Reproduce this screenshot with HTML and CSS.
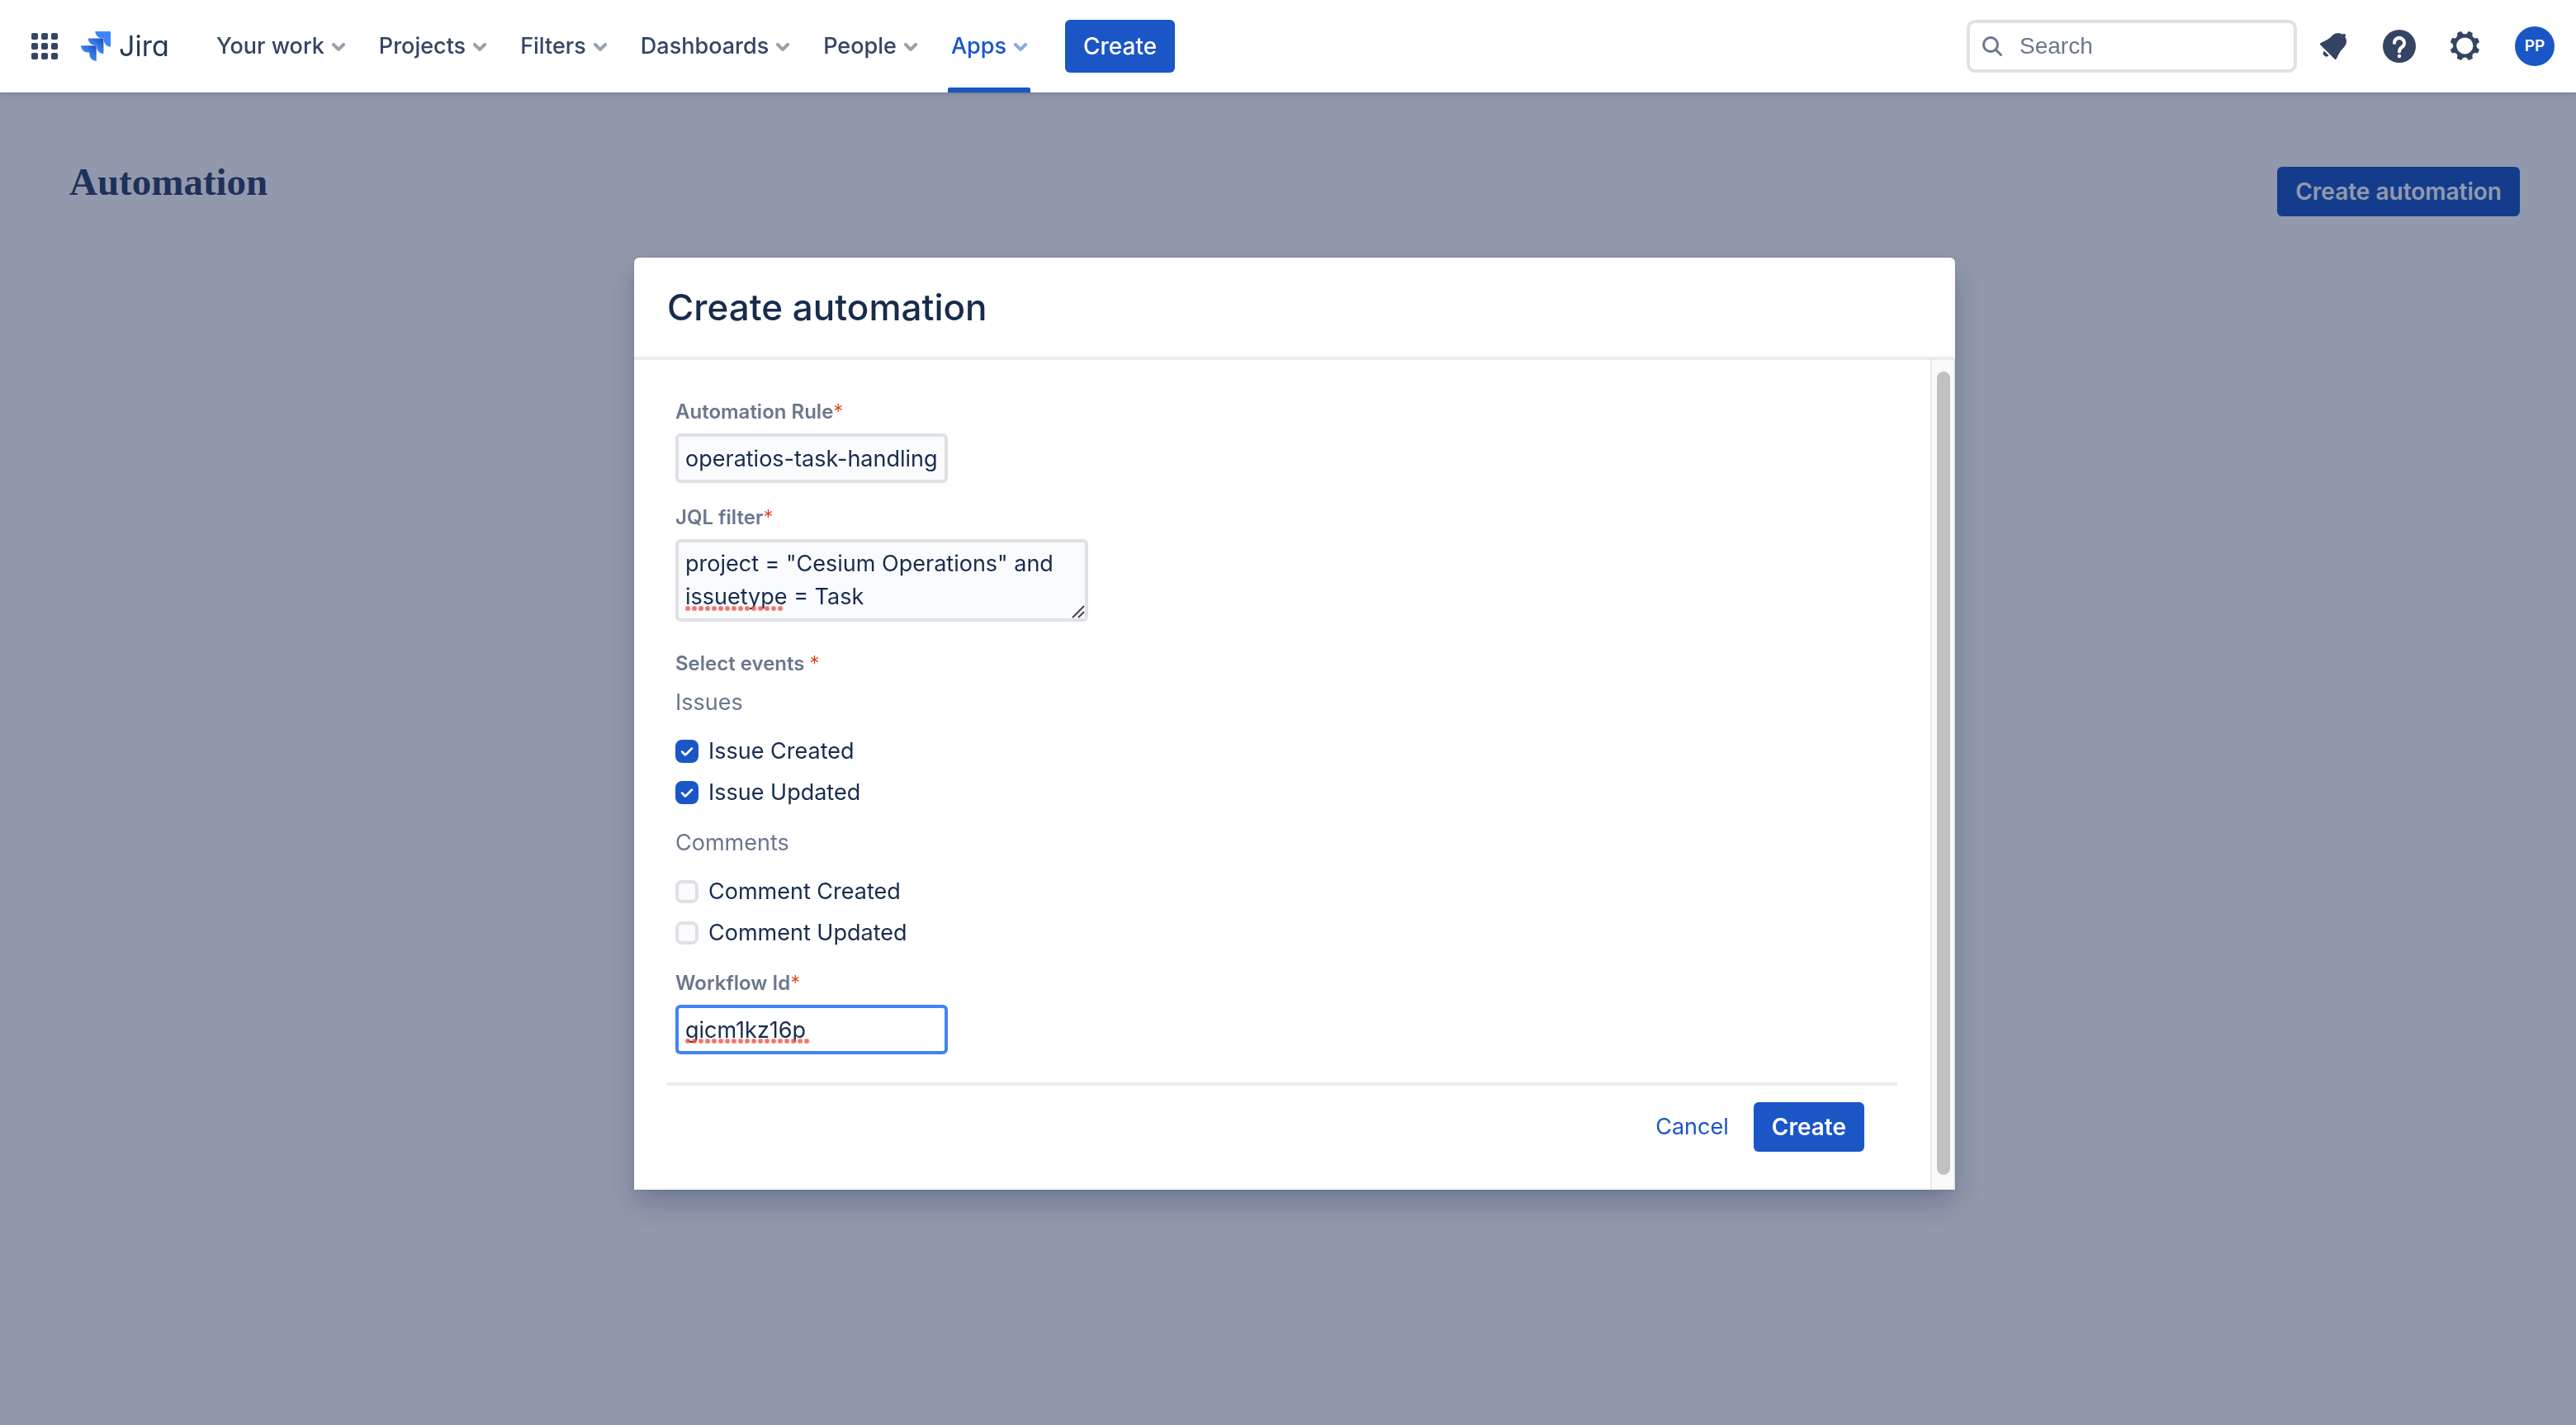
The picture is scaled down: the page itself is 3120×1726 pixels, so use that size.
FILE: index.html
```html
<!DOCTYPE html>
<html lang="en">
<head>
<meta charset="utf-8">
<title>Automation - Jira</title>
<link rel="stylesheet" href="styles.css">
</head>
<body>
<svg class="defs" aria-hidden="true">
  <defs>
    <linearGradient id="fold" x1="1" y1="0" x2="0.4" y2="0.6">
      <stop offset="0.1" stop-color="#1f54bd"/>
      <stop offset="1" stop-color="#3f86fa"/>
    </linearGradient>
    <symbol id="chevron" viewBox="6 6 12 12">
      <path d="M8.292 10.293a1.009 1.009 0 000 1.419l2.939 2.965c.218.215.5.322.779.322s.556-.107.769-.322l2.93-2.955a1.01 1.01 0 000-1.419.987.987 0 00-1.406 0l-2.298 2.317-2.307-2.327a.99.99 0 00-1.406 0z"/>
    </symbol>
  </defs>
</svg>

<header class="topbar">
  <button class="switcher" type="button" aria-label="Switch to">
    <svg width="32" height="32" viewBox="0 0 32 32">
      <rect x="0" y="0" width="8" height="8" rx="2"/><rect x="12" y="0" width="8" height="8" rx="2"/><rect x="24" y="0" width="8" height="8" rx="2"/>
      <rect x="0" y="12" width="8" height="8" rx="2"/><rect x="12" y="12" width="8" height="8" rx="2"/><rect x="24" y="12" width="8" height="8" rx="2"/>
      <rect x="0" y="24" width="8" height="8" rx="2"/><rect x="12" y="24" width="8" height="8" rx="2"/><rect x="24" y="24" width="8" height="8" rx="2"/>
    </svg>
  </button>
  <a class="brand" href="#">
    <svg width="36" height="36" viewBox="0 0 36 36" aria-hidden="true">
      <path fill="#3f86fa" d="M17.3 0H35a1 1 0 0 1 1 1V18.7a8.4 8.4 0 0 1-8.4-8.4V8.4H25.7A8.4 8.4 0 0 1 17.3 0z"/>
      <path fill="url(#fold)" d="M8.7 8.5H26.4a1 1 0 0 1 1 1V27.2a8.4 8.4 0 0 1-8.4-8.4V16.9H17.1A8.4 8.4 0 0 1 8.7 8.5z"/>
      <path fill="url(#fold)" d="M0 17.2H17.7a1 1 0 0 1 1 1V35.9a8.4 8.4 0 0 1-8.4-8.4V25.6H8.4A8.4 8.4 0 0 1 0 17.2z"/>
    </svg>
    <span class="wordmark">Jira</span>
  </a>
  <nav class="nav">
    <a class="nav-item" href="#">Your work<svg class="chev"><use href="#chevron"/></svg></a>
    <a class="nav-item" href="#">Projects<svg class="chev"><use href="#chevron"/></svg></a>
    <a class="nav-item" href="#">Filters<svg class="chev"><use href="#chevron"/></svg></a>
    <a class="nav-item" href="#">Dashboards<svg class="chev"><use href="#chevron"/></svg></a>
    <a class="nav-item" href="#">People<svg class="chev"><use href="#chevron"/></svg></a>
    <a class="nav-item active" href="#">Apps<svg class="chev"><use href="#chevron"/></svg></a>
  </nav>
  <button class="btn nav-create" type="button">Create</button>
  <div class="tools">
    <label class="search">
      <svg width="26" height="26" viewBox="0 0 26 26" aria-hidden="true"><circle cx="11" cy="11" r="8.5"/><path d="M17.5 17.5L23.5 23.5"/></svg>
      <input type="search" placeholder="Search" aria-label="Search">
    </label>
    <button class="icon-btn" type="button" aria-label="Notifications">
      <svg width="48" height="48" viewBox="0 0 24 24"><path d="M6.485 17.669a2 2 0 002.829 0l-2.829-2.83a2 2 0 000 2.83zm4.897-12.191l-.725.725c-.782.782-2.21 1.813-3.206 2.311l-3.017 1.509c-.495.248-.584.774-.187 1.171l8.556 8.556c.398.396.922.313 1.171-.188l1.51-3.016c.494-.988 1.526-2.42 2.311-3.206l.725-.726a5.048 5.048 0 00.64-6.356 1.01 1.01 0 10-1.354-1.494c-.023.025-.046.049-.066.075a5.043 5.043 0 00-2.788-.84 5.036 5.036 0 00-3.57 1.478z"/></svg>
    </button>
    <button class="icon-btn" type="button" aria-label="Help">
      <svg width="48" height="48" viewBox="0 0 24 24"><circle cx="12" cy="12" r="10"/><path fill="none" stroke="#fff" stroke-width="2" stroke-linecap="round" d="M9 10a3 3 0 1 1 4.6 2.5C12.6 13.2 12 13.8 12 15.2"/><circle cx="12" cy="18" r="1.1" fill="#fff"/></svg>
    </button>
    <button class="icon-btn" type="button" aria-label="Settings">
      <svg width="48" height="48" viewBox="0 0 24 24"><path d="M11.701 16.7a5.002 5.002 0 110-10.003 5.002 5.002 0 010 10.004m8.368-3.117a1.995 1.995 0 01-1.346-1.885c0-.876.563-1.613 1.345-1.885a.48.48 0 00.315-.574 8.947 8.947 0 00-.836-1.993.477.477 0 00-.598-.195 2.04 2.04 0 01-1.29.08 1.988 1.988 0 01-1.404-1.395 2.04 2.04 0 01.076-1.297.478.478 0 00-.196-.597 8.98 8.98 0 00-1.975-.826.479.479 0 00-.574.314 1.995 1.995 0 01-1.885 1.346 1.994 1.994 0 01-1.884-1.345.482.482 0 00-.575-.315c-.708.2-1.379.485-2.004.842a.47.47 0 00-.198.582A2.002 2.002 0 014.445 7.06a.478.478 0 00-.595.196 8.946 8.946 0 00-.833 1.994.48.48 0 00.308.572 1.995 1.995 0 011.323 1.877c0 .867-.552 1.599-1.324 1.877a.479.479 0 00-.308.57 8.99 8.99 0 00.723 1.79.477.477 0 00.624.194c.595-.273 1.343-.264 2.104.238.117.077.225.185.302.3.527.8.512 1.58.198 2.188a.473.473 0 00.168.628 8.946 8.946 0 002.11.897.474.474 0 00.57-.313 1.995 1.995 0 011.886-1.353c.878 0 1.618.567 1.887 1.353a.475.475 0 00.57.313 8.964 8.964 0 002.084-.883.473.473 0 00.167-.631c-.318-.608-.337-1.393.191-2.195.077-.116.185-.225.302-.302.772-.511 1.527-.513 2.125-.23a.477.477 0 00.628-.19 8.925 8.925 0 00.728-1.793.478.478 0 00-.314-.573"/></svg>
    </button>
    <button class="icon-btn profile" type="button" aria-label="Profile"><span class="avatar">PP</span></button>
  </div>
</header>

<main class="page">
  <h1 class="page-title">Automation</h1>
  <button class="btn page-create" type="button">Create automation</button>
</main>

<div class="blanket">
  <section class="modal" role="dialog" aria-labelledby="dialog-title">
    <header class="modal-head"><h2 class="modal-title" id="dialog-title">Create automation</h2></header>
    <div class="modal-body">
      <form class="form">
        <div class="fields">
          <label class="label" for="rule">Automation Rule<span class="req">*</span></label>
          <input class="text" id="rule" type="text" value="operatios-task-handling">

          <label class="label" for="jql">JQL filter<span class="req">*</span></label>
          <div class="field-wrap">
            <textarea class="text area" id="jql" spellcheck="false">project = "Cesium Operations" and issuetype = Task</textarea>
            <span class="misspelt misspelt-jql" aria-hidden="true"></span>
            <svg class="grip" width="16" height="16" viewBox="0 0 16 16" aria-hidden="true"><path d="M1 15L15 1M8 15L15 8"/></svg>
          </div>

          <fieldset class="events">
            <legend class="label">Select events <span class="req">*</span></legend>
            <p class="group">Issues</p>
            <label class="check"><input type="checkbox" checked>Issue Created</label>
            <label class="check"><input type="checkbox" checked>Issue Updated</label>
            <p class="group">Comments</p>
            <label class="check"><input type="checkbox">Comment Created</label>
            <label class="check"><input type="checkbox">Comment Updated</label>
          </fieldset>

          <label class="label" for="workflow">Workflow Id<span class="req">*</span></label>
          <div class="field-wrap">
            <input class="text focused" id="workflow" type="text" value="gicm1kz16p" spellcheck="false">
            <span class="misspelt misspelt-id" aria-hidden="true"></span>
          </div>
        </div>
        <footer class="actions">
          <button class="btn link" type="button">Cancel</button>
          <button class="btn submit" type="button">Create</button>
        </footer>
      </form>
      <div class="track" aria-hidden="true"><div class="thumb"></div></div>
    </div>
  </section>
</div>
</body>
</html>
```
FILE: styles.css
```css
* { box-sizing: border-box; }

body {
  margin: 0;
  min-height: 100vh;
  font-family: Inter, "Liberation Sans", sans-serif;
  font-size: 27px;
  line-height: 40px;
  color: #172b4d;
  background: #fff;
}

button, input, textarea { font: inherit; color: inherit; margin: 0; }
button { border: 0; padding: 0; background: none; }
a { color: inherit; text-decoration: none; }
svg { display: block; flex: none; }
.defs { position: absolute; width: 0; height: 0; }

/* Top bar */
.topbar {
  position: relative;
  z-index: 3;
  display: flex;
  align-items: center;
  height: 112px;
  padding: 0 18px 0 38px;
  background: #fff;
  color: #344563;
  box-shadow: 0 2px 2px rgba(9, 30, 66, 0.13), 0 4px 12px rgba(9, 30, 66, 0.08);
}
.switcher svg, .icon-btn svg { fill: #344563; }
.brand { display: flex; align-items: center; gap: 10px; margin-left: 28px; width: 104px; }
.wordmark { font-size: 34px; color: #253858; font-feature-settings: "cv11"; }
.nav { display: flex; align-self: stretch; gap: 33px; margin-left: 56px; }
.nav-item {
  position: relative;
  display: flex;
  align-items: center;
  gap: 5px;
  padding: 0 0 0 4px;
  font-weight: 500;
}
.chev { width: 24px; height: 24px; fill: currentColor; opacity: 0.5; }
.active { color: #1a56c6; }
.active::after {
  content: "";
  position: absolute;
  left: 0;
  right: 0;
  bottom: 0;
  height: 6px;
  border-radius: 2px 2px 0 0;
  background: #1a56c6;
}
.btn {
  height: 60px;
  padding: 0 22px;
  border-radius: 6px;
  background: #1a56c6;
  color: #fff;
  font-size: 28px;
  font-weight: 600;
}
.nav-create { height: 64px; margin-left: 42px; font-weight: 500; }
.tools { display: flex; align-items: center; gap: 16px; margin-left: auto; }
.search {
  display: flex;
  align-items: center;
  gap: 20px;
  width: 400px;
  height: 64px;
  margin-right: -4px;
  padding: 0 14px;
  border: 4px solid #dfe1e6;
  border-radius: 10px;
  color: #6b778c;
}
.search svg { fill: none; stroke: #6b778c; stroke-width: 3; stroke-linecap: round; }
.search input {
  flex: 1;
  min-width: 0;
  padding: 0;
  border: 0;
  outline: 0;
  background: none;
  font: 28px/40px "Liberation Sans", Arial, sans-serif;
}
.search input::placeholder { color: #6b778c; opacity: 1; }
.icon-btn { display: grid; place-items: center; width: 64px; height: 64px; }
.profile { margin-left: 4px; }
.avatar {
  display: grid;
  place-items: center;
  width: 48px;
  height: 48px;
  border-radius: 50%;
  background: #1a56c6;
  color: #fff;
  font-size: 19px;
  font-weight: 600;
}

/* Page behind the dialog */
.page {
  display: flex;
  justify-content: space-between;
  align-items: flex-start;
  padding: 90px 68px 0 84px;
}
.page-title {
  margin: 0;
  font: bold 47px/36px "Liberation Serif", "Times New Roman", serif;
  color: #2f436a;
}

/* Dialog */
.blanket {
  position: fixed;
  inset: 0;
  z-index: 2;
  display: flex;
  justify-content: center;
  align-items: flex-start;
  padding: 312px 0 0 16px;
  background: rgba(14, 28, 70, 0.45);
}
.modal {
  width: 1600px;
  max-width: 94%;
  border-radius: 6px 6px 0 0;
  background: #fff;
  box-shadow: 0 16px 32px rgba(9, 30, 66, 0.25), 0 0 2px rgba(9, 30, 66, 0.31);
}
.modal-head { padding: 40px; border-bottom: 4px solid #ebecf0; }
.modal-title { margin: 0; font-size: 44px; font-weight: 500; line-height: 40px; }
.modal-body { display: flex; }
.form { flex: 1; padding: 43px 40px 46px; }
.fields { padding: 0 10px 12px; }
.label {
  display: block;
  width: max-content;
  padding: 0;
  font-size: 24px;
  font-weight: 600;
  line-height: 40px;
  color: #6b778c;
}
.req { font-weight: 300; color: #de350b; }
.text {
  display: block;
  width: 330px;
  height: 60px;
  padding: 0 8px;
  border: 4px solid #dfe1e6;
  border-radius: 6px;
  outline: 0;
  background: #fafbfc;
}
.fields > .text, .field-wrap { margin: 6px 0 22px; }
.focused { border-color: #4083f7; background: #fff; }
.field-wrap { position: relative; width: max-content; }
.area { width: 500px; height: 100px; padding: 6px 8px; resize: none; overflow: hidden; }
.misspelt {
  position: absolute;
  left: 12px;
  bottom: 13px;
  height: 6px;
  background: radial-gradient(circle at 3px 3px, rgba(240, 90, 78, 0.85) 2px, rgba(240, 90, 78, 0) 4px) 0 0 / 8px 6px;
}
.misspelt-jql { width: 120px; }
.misspelt-id { width: 152px; }
.grip { position: absolute; right: 4px; bottom: 4px; fill: none; stroke: #444; stroke-width: 2; }
.events { margin: 31px 0 16px; padding: 0; border: 0; }
.group { margin: 7px 0 14px; color: #6b778c; }
.check + .group { margin-top: 16px; }
.check { display: flex; align-items: center; gap: 12px; width: max-content; height: 50px; }
.check input {
  appearance: none;
  width: 28px;
  height: 28px;
  border: 4px solid #dfe1e6;
  border-radius: 8px;
  background: #fafbfc;
}
.check input:checked {
  border-color: #1a56c6;
  background: #1a56c6 url("data:image/svg+xml,%3Csvg xmlns='http://www.w3.org/2000/svg' viewBox='0 0 20 20'%3E%3Cpath d='M4 10.5l4 4 8-8' fill='none' stroke='white' stroke-width='2.500' stroke-linecap='round' stroke-linejoin='round'/%3E%3C/svg%3E") center / 20px no-repeat;
}
.actions {
  display: flex;
  justify-content: flex-end;
  gap: 8px;
  padding: 20px 40px 0 0;
  border-top: 4px solid #ebecf0;
}
.link { background: none; color: #1a56c6; font-size: 27px; font-weight: 400; }
.track {
  display: flex;
  width: 30px;
  padding: 14px 4px 18px 6px;
  border: solid #e8e8e8;
  border-width: 0 2px;
  background: #fafafa;
}
.thumb { width: 16px; border-radius: 8px; background: #c1c1c1; }
```
